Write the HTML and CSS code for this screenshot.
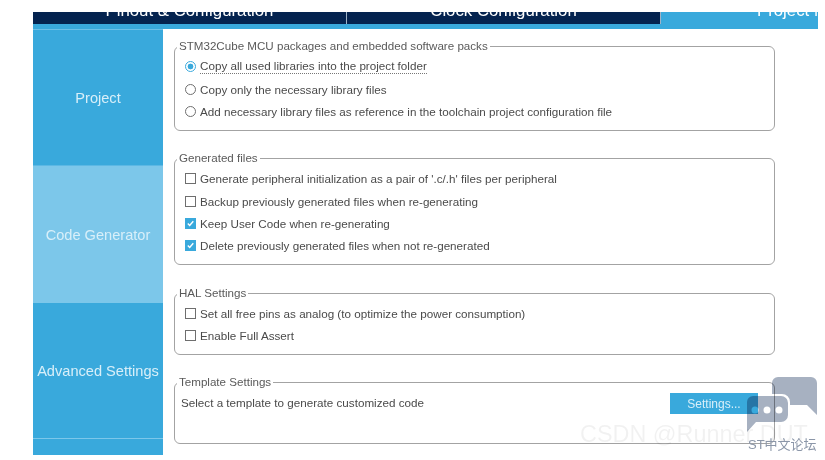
FILE: index.html

```html
<!DOCTYPE html>
<html lang="en">
  <head>
    <meta charset="UTF-8" />
    <title>Project Manager</title>
    <link rel="stylesheet" href="styles.css">
  </head>
  <body>
    <div class="window">
      <div class="tabs">
        <div class="tab tab-pinout"><span>Pinout &amp; Configuration</span></div>
        <div class="tab tab-clock"><span>Clock Configuration</span></div>
        <div class="tab tab-project"><span>Project Manager</span></div>
      </div>
      <div class="strip"></div>
      <div class="body">
        <div class="sidebar">
          <div class="side-item side-project">Project</div>
          <div class="side-item side-code active">Code Generator</div>
          <div class="side-item side-advanced">Advanced Settings</div>
          <div class="side-rest"></div>
        </div>
        <div class="panel">
          <fieldset class="group group-packs">
            <legend>STM32Cube MCU packages and embedded software packs</legend>
            <label class="row"><span class="radio on"></span><span class="focused">Copy all used libraries into the project folder</span></label>
            <label class="row"><span class="radio"></span>Copy only the necessary library files</label>
            <label class="row"><span class="radio"></span>Add necessary library files as reference in the toolchain project configuration file</label>
          </fieldset>
          <fieldset class="group group-files">
            <legend>Generated files</legend>
            <label class="row"><span class="check"></span>Generate peripheral initialization as a pair of '.c/.h' files per peripheral</label>
            <label class="row"><span class="check"></span>Backup previously generated files when re-generating</label>
            <label class="row"><span class="check on"><svg viewBox="0 0 11 11"><path d="M2.2 5.6 4.5 8 8.9 2.8" /></svg></span>Keep User Code when re-generating</label>
            <label class="row"><span class="check on"><svg viewBox="0 0 11 11"><path d="M2.2 5.6 4.5 8 8.9 2.8" /></svg></span>Delete previously generated files when not re-generated</label>
          </fieldset>
          <fieldset class="group group-hal">
            <legend>HAL Settings</legend>
            <label class="row"><span class="check"></span>Set all free pins as analog (to optimize the power consumption)</label>
            <label class="row"><span class="check"></span>Enable Full Assert</label>
          </fieldset>
          <fieldset class="group group-template">
            <legend>Template Settings</legend>
            <div class="template-row">
              <span>Select a template to generate customized code</span>
              <button type="button">Settings...</button>
            </div>
          </fieldset>
        </div>
      </div>
    </div>

    <div class="mark-csdn">CSDN @Runner DUT</div>
    <svg class="mark-icon" viewBox="0 0 72 57" width="72" height="57">
      <path d="M26 7a6 6 0 0 1 6-6h33a6 6 0 0 1 6 6V39L61 29H44V26a8 8 0 0 0-8-8H26z" />
      <path fill-rule="evenodd" d="M7 20h28a7 7 0 0 1 7 7v12a7 7 0 0 1-7 7H10L1 56V26a6 6 0 0 1 6-6zM5.500 34a3.500 3.500 0 1 0 7 0a3.500 3.500 0 1 0-7 0zM17.500 34a3.500 3.500 0 1 0 7 0a3.500 3.500 0 1 0-7 0zM29.500 34a3.500 3.500 0 1 0 7 0a3.500 3.500 0 1 0-7 0z" />
    </svg>
    <div class="mark-st">ST中文论坛</div>
  </body>
</html>
```

FILE: styles.css

```css
html, body {
  margin: 0;
  padding: 0;
  height: 100%;
  overflow: hidden;
  background: #fff;
}
body {
  font-family: "Liberation Sans", Arial, sans-serif;
  font-size: 11.67px;
  color: #4a4a4a;
  padding: 12px 0 0 33px;
  box-sizing: border-box;
}
.window {
  width: 785px;
  height: 443px;
  display: flex;
  flex-direction: column;
  overflow: hidden;
  filter: blur(0.35px); /* the reference is a slightly soft upscaled shot */
}

/* top tabs, the text is cut off by the top of the picture */
.tabs {
  display: flex;
  height: 12px;
  flex: none;
}
.tab {
  display: flex;
  justify-content: center;
  align-items: flex-end;
  overflow: hidden;
  color: #fff;
  font-size: 16.8px;
  line-height: 12px;
  background: #04234f;
  box-sizing: border-box;
}
.tab span {
  white-space: nowrap;
  position: relative;
  top: -7px;
}
.tab-pinout {
  width: 314px;
  border-right: 1px solid #9fb3c8;
}
.tab-clock {
  width: 314px;
  border-right: 1px solid #9fb3c8;
}
.tab-project {
  flex: 1;
  background: #39a9dc;
  justify-content: flex-start;
  padding-left: 96px;
}
.strip {
  height: 5px;
  flex: none;
  background: #39a9dc;
}

.body {
  flex: 1;
  display: flex;
  min-height: 0;
}
.sidebar {
  width: 130px;
  flex: none;
  display: flex;
  flex-direction: column;
  background: #39a9dc;
  border-top: 1px solid #6cc0e8;
  box-sizing: border-box;
}
.side-item {
  display: flex;
  align-items: center;
  justify-content: center;
  color: #d8eff9;
  font-size: 14.6px;
  white-space: nowrap;
  background: #39a9dc;
}
.side-project {
  height: 135px;
}
.side-code {
  height: 138px;
}
.side-advanced {
  height: 136px;
  border-bottom: 1px solid #7cc7ea;
  box-sizing: border-box;
}
.side-item.active {
  background: #7cc7ea;
  border-top: 1px solid #5cb8e4;
  box-sizing: border-box;
}
.side-rest {
  flex: 1;
}

.panel {
  flex: 1;
  padding: 10px 0 0 11px;
  display: flex;
  flex-direction: column;
  gap: 20px;
}
.group {
  width: 601px;
  margin: 0;
  padding: 0 0 0 10px;
  border: 1px solid #a3a3a3;
  border-radius: 6px;
  box-sizing: border-box;
  flex: none;
}
.group legend {
  padding: 0 2px;
  margin-left: -8px;
  line-height: 14px;
  color: #5a5a5a;
  font-size: 11.6px;
}
.group-packs {
  height: 92px;
}
.group-files {
  height: 114px;
}
.group-hal {
  height: 69px;
  margin-top: 1px;
}
.group-hal .row:first-of-type {
  margin-top: 2px;
}
.group-template {
  height: 69px;
  padding-left: 6px;
}
.group-template legend {
  margin-left: -4px;
}
.row {
  display: flex;
  align-items: center;
  gap: 4px;
  height: 22.4px;
  white-space: nowrap;
}
.row:first-of-type {
  margin-top: 2.6px;
}
.radio {
  width: 9px;
  height: 9px;
  border: 1px solid #6e6e6e;
  border-radius: 50%;
  background: #fff;
  flex: none;
}
.radio.on {
  border-color: #39a9dc;
  background: radial-gradient(circle, #39a9dc 0 2.6px, #fff 3.2px);
}
.check {
  width: 9px;
  height: 9px;
  border: 1px solid #6e6e6e;
  background: #fff;
  flex: none;
}
.check.on {
  border-color: #39a9dc;
  background: #39a9dc;
  display: flex;
}
.check svg {
  width: 9px;
  height: 9px;
  fill: none;
  stroke: #fff;
  stroke-width: 1.7;
}
.focused {
  border-bottom: 1px dotted #777;
  line-height: 14px;
}
.template-row {
  display: flex;
  align-items: flex-start;
  justify-content: space-between;
  width: 577px;
  padding-top: 4px;
}
.template-row span {
  padding-top: 3px;
}
.template-row button {
  width: 88px;
  height: 21px;
  border: 0;
  padding: 0;
  background: #39a9dc;
  color: #d8eff9;
  font: 12px "Liberation Sans", Arial, sans-serif;
}

/* watermarks pasted over the screenshot */
.mark-csdn {
  position: absolute;
  left: 580px;
  top: 420px;
  font-size: 23.4px;
  line-height: 28px;
  color: #000;
  opacity: 0.05;
  white-space: nowrap;
}
.mark-icon {
  position: absolute;
  left: 746px;
  top: 376px;
  fill: #a7b1c1;
  mix-blend-mode: multiply;
}
.mark-st {
  position: absolute;
  left: 748px;
  top: 437px;
  font-size: 13px;
  line-height: 15px;
  color: #8b96a8;
  white-space: nowrap;
  font-family: "Liberation Sans", "Noto Sans CJK SC", sans-serif;
}
```
